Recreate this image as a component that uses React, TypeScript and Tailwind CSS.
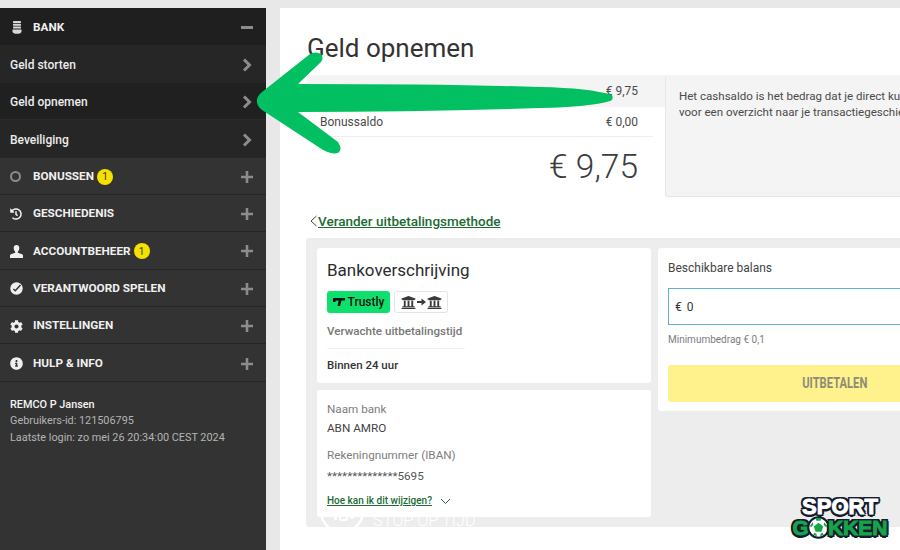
import { FaCog, FaHistory, FaInfoCircle, FaUniversity } from "react-icons/fa";
import type { ReactNode } from "react";

const Chevron = () => (
  <svg width="10" height="14" viewBox="0 0 10 14" fill="none" stroke="#8c8c8c" strokeWidth="3">
    <path d="M2 1.500 7.500 7 2 12.500" />
  </svg>
);

const Plus = () => (
  <svg width="12" height="12" viewBox="0 0 12 12" fill="#8c8c8c">
    <path d="M4.700 0h2.600v4.700H12v2.600H7.300V12H4.700V7.300H0V4.700h4.700z" />
  </svg>
);

const Badge = () => (
  <span className="ml-[3px] flex h-4 w-4 items-center justify-center rounded-full bg-[#f5e000] text-[10px] font-normal text-[#333]">
    1
  </span>
);

const CoinsIcon = () => (
  <svg width="10" height="13" viewBox="0 0 10 13" fill="#d8d8d8">
    <rect x="1" y="0" width="8" height="2" rx="0.600" />
    <rect x="1" y="2.800" width="8" height="2" rx="0.600" />
    <rect x="1" y="5.600" width="8" height="2" rx="0.600" />
    <path d="M0.500 8.500h9v2c0 1.400-2 2.300-4.500 2.300S.5 11.900.5 10.500z" />
  </svg>
);

const BustIcon = () => (
  <svg width="13" height="13" viewBox="0 0 13 13" fill="#f0f0f0">
    <path d="M6.500 0C8.300 0 9.300 1.300 9.300 3c0 1.600-.7 3-1.500 3.700v1.100c1.500.6 4.700 1 5.200 2.400V13H0v-2.800c.5-1.400 3.700-1.800 5.200-2.400V6.700C4.400 6 3.700 4.600 3.700 3 3.700 1.300 4.700 0 6.500 0z" />
  </svg>
);

const GaugeIcon = () => (
  <svg width="13" height="13" viewBox="0 0 13 13">
    <circle cx="6.500" cy="6.500" r="6.200" fill="#f0f0f0" />
    <path d="M3.400 7 5.300 8.800 10.500 3" fill="none" stroke="#333" strokeWidth="1.500" />
  </svg>
);

const BankGlyph = () => <FaUniversity size={15} color="#3a3a3a" />;

const TrustlyMark = () => (
  <svg width="12" height="8" viewBox="0 0 12 8" fill="#111">
    <path d="M0 0h12v2.600H8.500L7 8H4.600l1-5.400H2.800L2.300 4H0z" />
  </svg>
);

const Ball = () => (
  <svg width="23" height="23" viewBox="0 0 22 22" className="-mx-[2px]">
    <circle cx="11" cy="11" r="9.800" fill="#fff" stroke="#141c2e" strokeWidth="2" />
    <path d="M11 6.500 15.500 10 13.800 15H8.200L6.500 10z" fill="#16a34a" />
    <path d="M8 2h6l-1 2.500H9zM3 9l2.500-3L6 8.500 3.500 11zM19 9l-2.500-3-.5 2.500 2.500 2.500zM6 18l1-2 2 1 .5 2.500zM16 18l-1-2-2 1-.5 2.500z" fill="#16a34a" />
  </svg>
);

function SubRow({ label, dark }: { label: string; dark?: boolean }) {
  return (
    <div
      className={`flex h-[37.500px] items-center justify-between pl-[10px] pr-[14px] pt-[2px] text-[12px] font-medium text-[#ececec] ${
        dark ? "bg-[#202020] border-b border-[#2b2b2b]" : "bg-[#262626]"
      }`}
    >
      {label}
      <Chevron />
    </div>
  );
}

function MenuRow({ icon, label, badge }: { icon: ReactNode; label: string; badge?: boolean }) {
  return (
    <div className="flex h-[37.400px] items-center border-b border-[#262626] pl-[10px] pr-[13px] pt-[2px] text-[11.750px] font-bold text-[#f0f0f0]">
      <span className="flex w-[23px] shrink-0 items-center">{icon}</span>
      {label}
      {badge && <Badge />}
      <span className="ml-auto">
        <Plus />
      </span>
    </div>
  );
}

function Sidebar() {
  return (
    <aside className="flex h-[542px] w-[266px] shrink-0 flex-col bg-[#333333]">
      <div className="flex h-[37px] items-center bg-[#1f1f1f] pl-[12px] pr-[13px] pt-[2px] text-[11.750px] font-bold text-[#f0f0f0]">
        <span className="flex w-[21px] items-center">
          <CoinsIcon />
        </span>
        BANK
        <span className="ml-auto h-[3px] w-3 bg-[#8c8c8c]" />
      </div>
      <SubRow label="Geld storten" />
      <SubRow label="Geld opnemen" dark />
      <SubRow label="Beveiliging" />
      <MenuRow
        icon={<span className="h-[11px] w-[11px] rounded-full border-2 border-[#8c8c8c]" />}
        label="BONUSSEN"
        badge
      />
      <MenuRow icon={<FaHistory size={12} color="#f0f0f0" />} label="GESCHIEDENIS" />
      <MenuRow icon={<BustIcon />} label="ACCOUNTBEHEER" badge />
      <MenuRow icon={<GaugeIcon />} label="VERANTWOORD SPELEN" />
      <MenuRow icon={<FaCog size={13} color="#f0f0f0" />} label="INSTELLINGEN" />
      <MenuRow icon={<FaInfoCircle size={13} color="#f0f0f0" />} label="HULP & INFO" />
      <div className="pl-[10px] pt-[15px] text-[10.850px] leading-[16.500px] text-[#b4b4b4]">
        <div className="font-medium text-[#f4f4f4]">REMCO P Jansen</div>
        <div>Gebruikers-id: 121506795</div>
        <div>Laatste login: zo mei 26 20:34:00 CEST 2024</div>
      </div>
    </aside>
  );
}

function Balance() {
  return (
    <div className="flex w-[760px]">
      <div className="w-[358px] shrink-0 text-[12px] text-[#4a4a4a]">
        <div className="flex h-[32px] items-center justify-between bg-[#f4f4f4] pl-[13px] pr-[27px]">
          <span>Cashsaldo</span>
          <span>€ 9,75</span>
        </div>
        <div className="mr-[12px] flex h-[30px] items-center justify-between border-b border-[#eeeeee] pl-[13px] pr-[15px] pt-[1px]">
          <span>Bonussaldo</span>
          <span>€ 0,00</span>
        </div>
        <div className="pr-[27px] pt-[9px] text-right text-[33.500px] font-light leading-[42px] text-[#3c3c3c]">
          € 9,75
        </div>
      </div>
      <div className="h-[122px] flex-1 rounded-[3px] border-b border-l border-[#e6e6e6] bg-[#f4f4f4] pl-[13px] pt-[13px] text-[11.550px] leading-[16px] text-[#4a4a4a]">
        <div className="whitespace-nowrap">Het cashsaldo is het bedrag dat je direct kunt opnemen. Ga</div>
        <div className="whitespace-nowrap">voor een overzicht naar je transactiegeschiedenis.</div>
      </div>
    </div>
  );
}

function MethodCard() {
  return (
    <div className="h-[135px] rounded-[3px] bg-white pl-[10px] pt-[12px]">
      <div className="text-[17px] font-normal leading-[20px] text-[#2c2c2c]">Bankoverschrijving</div>
      <div className="mt-[11px] flex gap-1">
        <div className="flex h-[22px] w-[63px] items-center justify-center gap-[3px] rounded-[3px] bg-[#0ee06e] text-[12px] font-medium text-[#111]">
          <TrustlyMark />
          Trustly
        </div>
        <div className="flex h-[22px] w-[54px] items-center justify-center gap-px rounded-[3px] border border-[#e4e4e4]">
          <BankGlyph />
          <svg width="9" height="8" viewBox="0 0 9 8" fill="#3a3a3a">
            <path d="M0 3h4.500V0.500L9 4 4.500 7.500V5H0z" />
          </svg>
          <BankGlyph />
        </div>
      </div>
      <div className="mt-[10px] w-[138px] whitespace-nowrap border-b border-[#f0f0f0] pb-[9px] text-[11.600px] font-medium leading-[16px] text-[#777]">
        Verwachte uitbetalingstijd
      </div>
      <div className="mt-[8px] text-[11.500px] font-medium leading-[16px] text-[#333]">Binnen 24 uur</div>
    </div>
  );
}

function AccountCard() {
  return (
    <div className="relative z-10 h-[127px] rounded-[3px] bg-white pl-[10px] pt-[11px] text-[11.700px] leading-[16px]">
      <div className="text-[#7d7d7d]">Naam bank</div>
      <div className="mt-[3px] text-[#444]">ABN AMRO</div>
      <div className="mt-[11px] text-[#7d7d7d]">Rekeningnummer (IBAN)</div>
      <div className="mt-[5px] text-[#555]">**************5695</div>
      <div className="mt-[9px] flex items-center gap-2 text-[10px] font-medium text-[#1d6b35]">
        <span className="underline">Hoe kan ik dit wijzigen?</span>
        <svg width="11" height="7" viewBox="0 0 11 7" fill="none" stroke="#1d6b35" strokeWidth="1">
          <path d="M1 1l4.500 4.500L10 1" />
        </svg>
      </div>
    </div>
  );
}

function AmountCard() {
  return (
    <div className="h-[163px] w-[400px] rounded-[3px] bg-white pl-[10px] pt-[12px]">
      <div className="text-[12px] leading-[16px] text-[#444]">Beschikbare balans</div>
      <div className="mt-[12px] flex h-[37px] w-[380px] items-center border border-[#5fb0d3] pl-[6px] text-[12px] text-[#333]">
        €<span className="ml-[5px]">0</span>
      </div>
      <div className="mt-[8px] text-[10px] leading-[14px] text-[#7d7d7d]">Minimumbedrag € 0,1</div>
      <div className="mt-[18px] flex h-[37px] w-[334px] items-center justify-center rounded-[3px] bg-[#fff18c] text-[14px] font-bold text-[#8c8c78]">
        <span className="inline-block scale-x-[0.8]">UITBETALEN</span>
      </div>
    </div>
  );
}

function StopIcon() {
  return (
    <svg className="absolute left-[13px] top-[250px]" width="46" height="46" viewBox="0 0 46 46" fill="none" stroke="#fff" strokeWidth="2.500">
      <circle cx="23" cy="23" r="21" />
      <rect x="15" y="25" width="3" height="7" fill="#fff" stroke="none" />
      <rect x="21" y="25" width="7" height="7" rx="1.500" strokeWidth="2" />
      <circle cx="33" cy="29" r="2" fill="#fff" stroke="none" />
    </svg>
  );
}

function Arrow() {
  return (
    <svg className="absolute left-0 top-0" width="900" height="550" viewBox="0 0 900 550" fill="#02bf62">
      <path d="M257 102Q256 97 262 92L310 54Q316 51 321 54 324 58 321 62L298 84Q450 84 540 87 590 88 612 95 614 100 610 101 590 107 540 108 420 112 298 112L338 142Q343 150 338 153 330 155 320 148L262 110Q257 106 257 102Z" />
    </svg>
  );
}

function Logo() {
  return (
    <div className="absolute left-[785px] top-[497px] flex w-[110px] flex-col items-center font-['Liberation_Sans',sans-serif] font-bold leading-[20px]">
      <div className="text-[22px] text-white [-webkit-text-stroke:1px_#fff] [text-shadow:2.500px_0_#141c2e,-2.500px_0_#141c2e,0_2.500px_#141c2e,0_-2.500px_#141c2e,2px_2px_#141c2e,-2px_-2px_#141c2e,2px_-2px_#141c2e,-2px_2px_#141c2e]">
        SPORT
      </div>
      <div className="flex h-[21px] items-center text-[21px] text-[#16a34a] [-webkit-text-stroke:1px_#16a34a] [text-shadow:2.500px_0_#141c2e,-2.500px_0_#141c2e,0_2.500px_#141c2e,0_-2.500px_#141c2e,2px_2px_#141c2e,-2px_-2px_#141c2e,2px_-2px_#141c2e,-2px_2px_#141c2e]">
        G
        <Ball />
        KKEN
      </div>
    </div>
  );
}

export default function App() {
  return (
    <div className="relative flex h-[550px] w-[900px] gap-[14px] overflow-hidden bg-[#e8e8e8] pt-2 font-['Roboto',sans-serif]">
      <Sidebar />
      <main className="min-w-0 flex-1 overflow-hidden bg-white pl-[27px] pt-[24px]">
        <h1 className="text-[26px] font-normal leading-[32px] text-[#333]">Geld opnemen</h1>
        <div className="mt-[11px]">
          <Balance />
        </div>
        <div className="mt-[15px] flex items-center pl-[2px] text-[13.500px] font-medium leading-[18px] text-[#1d6b35]">
          <svg width="9" height="12" viewBox="0 0 9 12" fill="none" stroke="#444" strokeWidth="1">
            <path d="M7.500 1 2 6l5.500 5" />
          </svg>
          <span className="underline">Verander uitbetalingsmethode</span>
        </div>
        <div className="relative -ml-px mt-[8px] flex h-[289px] w-[760px] gap-[7px] overflow-hidden rounded-[3px] bg-[#ededed] py-[10px] pl-[11px]">
          <div className="flex w-[334px] shrink-0 flex-col gap-[7px]">
            <MethodCard />
            <AccountCard />
          </div>
          <AmountCard />
          <StopIcon />
          <div className="absolute left-[67px] top-[272px] text-[16.300px] font-light leading-[22px] text-white">
            STOP OP TIJD
          </div>
        </div>
      </main>
      <Arrow />
      <Logo />
    </div>
  );
}
